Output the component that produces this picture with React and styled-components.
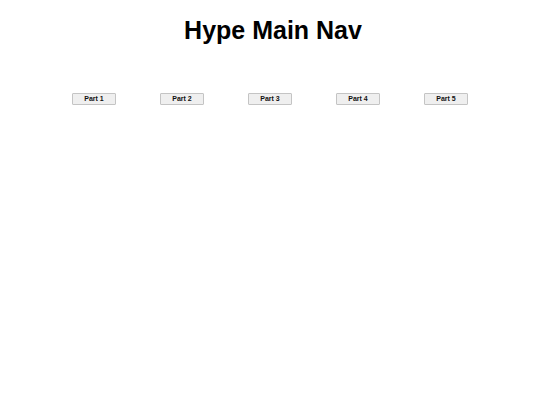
import React from "react";
import styled, { createGlobalStyle } from "styled-components";

const Global = createGlobalStyle`
  html, body { margin: 0; padding: 0; background: #fff; }
  body { font-family: "Liberation Sans", Arial, sans-serif; }
`;

const Page = styled.div`
  width: 540px;
  height: 405px;
  display: flex;
  flex-direction: column;
  align-items: center;
`;

const Title = styled.h1`
  margin: 16px 0 0 6px;
  font-size: 25px;
  line-height: 29px;
  font-weight: 700;
  color: #000;
`;

const Nav = styled.nav`
  margin-top: 48px;
  width: 440px;
  display: grid;
  grid-template-columns: repeat(5, 1fr);
`;

const Cell = styled.div`
  display: flex;
  justify-content: center;
`;

const NavButton = styled.button`
  width: 44px;
  height: 12px;
  padding: 0;
  box-sizing: border-box;
  border: 1px solid #c4c4c4;
  border-radius: 1px;
  background: #efefef;
  font-family: "Liberation Sans", Arial, sans-serif;
  font-size: 7px;
  font-weight: 700;
  color: #111;
  line-height: 10px;
`;

export default function App() {
  const parts = ["Part 1", "Part 2", "Part 3", "Part 4", "Part 5"];
  return (
    <>
      <Global />
      <Page>
        <Title>Hype Main Nav</Title>
        <Nav>
          {parts.map((p) => (
            <Cell key={p}>
              <NavButton>{p}</NavButton>
            </Cell>
          ))}
        </Nav>
      </Page>
    </>
  );
}
